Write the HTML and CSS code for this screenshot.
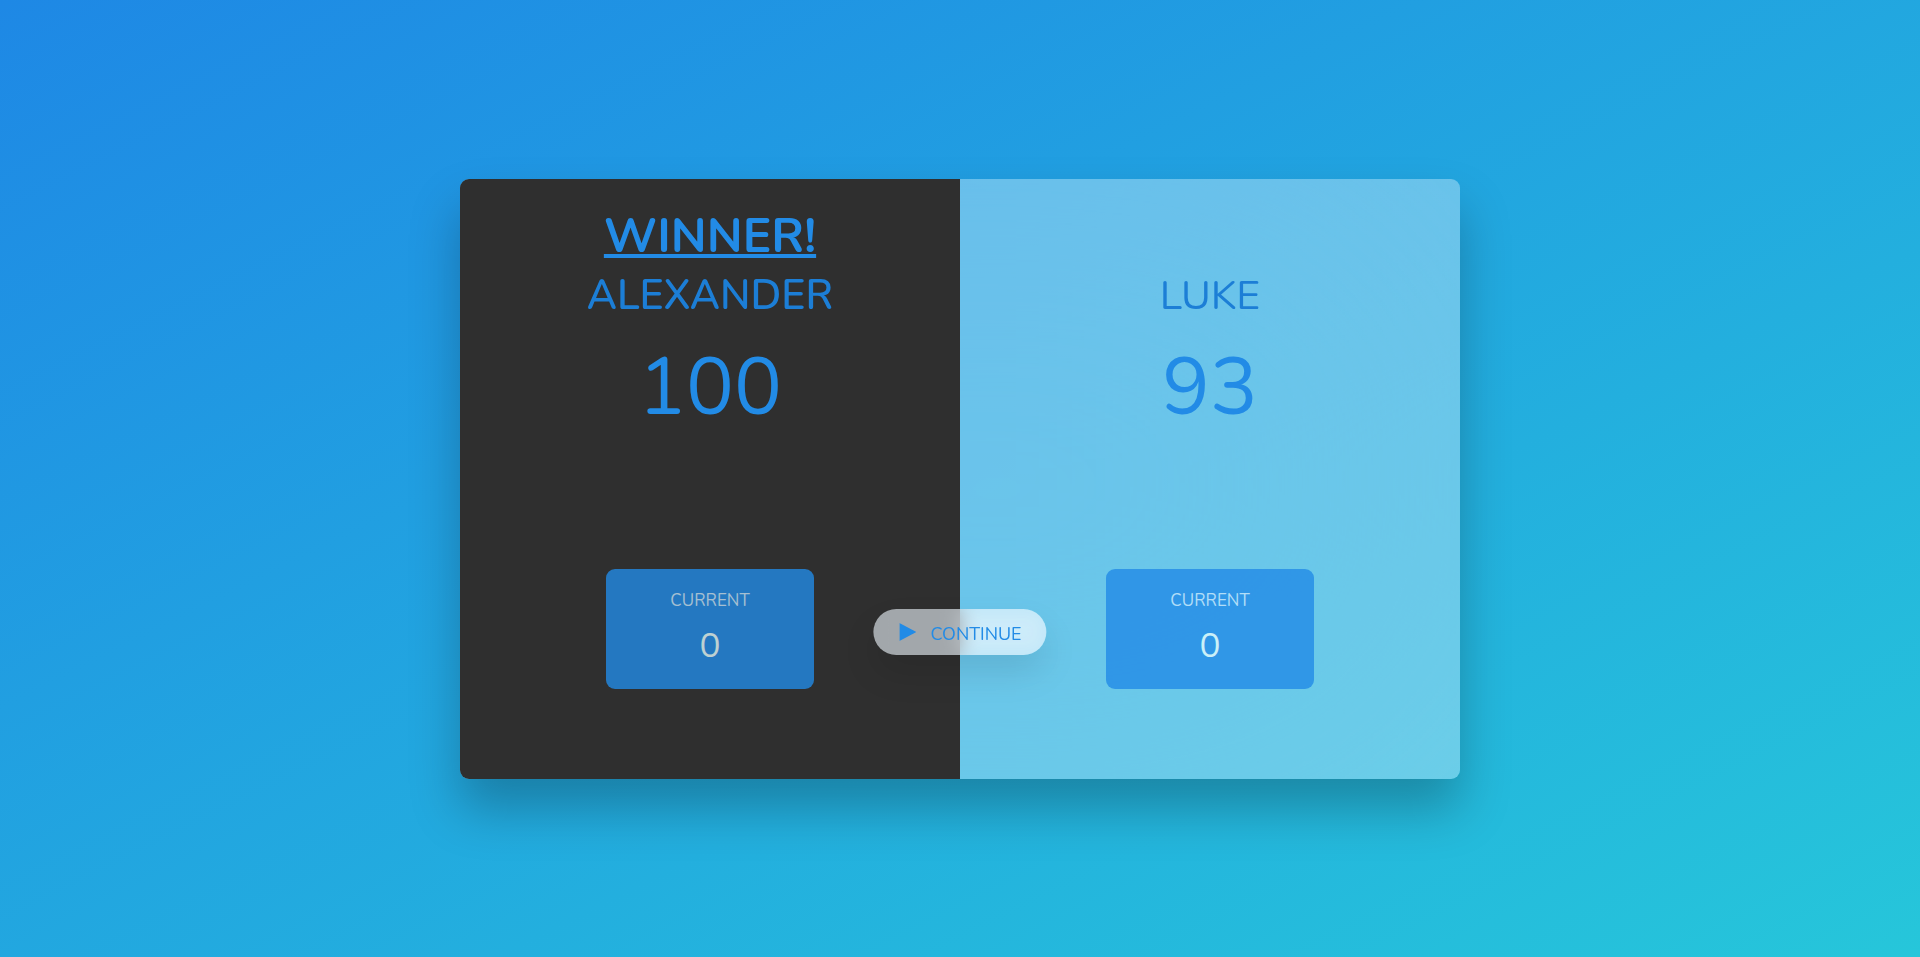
FILE: index.html
```html
<!DOCTYPE html>
<html lang="en">
<head>
<meta charset="utf-8">
<title>Pig Game</title>
<link rel="stylesheet" href="styles.css">
</head>
<body>
<main class="board">
  <section class="player player--winner">
    <h1 class="banner">WINNER!</h1>
    <h2 class="name">Alexander</h2>
    <p class="score">100</p>
    <div class="current">
      <p class="current-label">Current</p>
      <p class="current-score">0</p>
    </div>
  </section>
  <section class="player">
    <h2 class="name">Luke</h2>
    <p class="score">93</p>
    <div class="current">
      <p class="current-label">Current</p>
      <p class="current-score">0</p>
    </div>
  </section>
  <button class="continue" type="button">
    <svg class="play" viewBox="0 0 17 18" aria-hidden="true"><path d="M0 0L17 9L0 18Z" fill="#228be6"/></svg>
    <span class="continue-label">Continue</span>
  </button>
</main>
</body>
</html>
```
FILE: styles.css
```css
* {
  margin: 0;
  padding: 0;
  box-sizing: border-box;
}

body {
  min-height: 100vh;
  display: flex;
  align-items: center;
  justify-content: center;
  font-family: Nunito, Lato, "Open Sans", sans-serif;
  font-weight: 400;
  color: #333;
  background-image: linear-gradient(to top left, #26c6da 0%, #1e88e5 100%);
}

.board {
  position: relative;
  display: flex;
  width: 1000px;
  max-width: 100%;
  min-height: 600px;
  border-radius: 9px;
  overflow: hidden;
  background-color: rgba(240, 248, 255, 0.35);
  backdrop-filter: blur(200px);
  box-shadow: 0 30px 50px rgba(0, 0, 0, 0.25);
}

.player {
  flex: 1;
  display: flex;
  flex-direction: column;
  align-items: center;
  padding: 90px;
  text-align: center;
}

.player--winner {
  padding-top: 24px;
  background-color: #2f2f2f;
}

.banner {
  line-height: 66px;
  font-size: 48px;
  font-weight: 700;
  color: #228be6;
  text-decoration: underline;
  text-decoration-thickness: 4px;
}

.name {
  line-height: 54px;
  font-size: 41px;
  font-weight: 400;
  text-transform: uppercase;
  color: #1c7ed6;
}

.player--winner .name {
  font-weight: 600;
}

.score {
  margin-top: 15px;
  line-height: 100px;
  font-size: 80px;
  color: #228be6;
}

.current {
  width: 65%;
  margin-top: auto;
  padding: 20px;
  border-radius: 9px;
  background-color: #228be6;
  opacity: 0.8;
}

.current-label {
  margin-bottom: 10px;
  font-size: 17px;
  text-transform: uppercase;
  color: #c5e4fb;
}

.current-score {
  font-size: 35px;
  color: #e3fafc;
}

.continue {
  position: absolute;
  left: 50%;
  bottom: 124px;
  transform: translateX(-50%);
  display: flex;
  align-items: center;
  gap: 14px;
  padding: 10px 25px 10px 26px;
  border: none;
  border-radius: 50px;
  font-family: inherit;
  font-size: 18px;
  line-height: 22px;
  text-transform: uppercase;
  color: #228be6;
  background-color: rgba(240, 248, 255, 0.6);
  backdrop-filter: blur(10px);
  box-shadow: 0 18px 35px rgba(0, 0, 0, 0.1);
  cursor: pointer;
}

.continue-label {
  padding-top: 4px;
}

.play {
  width: 17px;
  height: 18px;
}
```
